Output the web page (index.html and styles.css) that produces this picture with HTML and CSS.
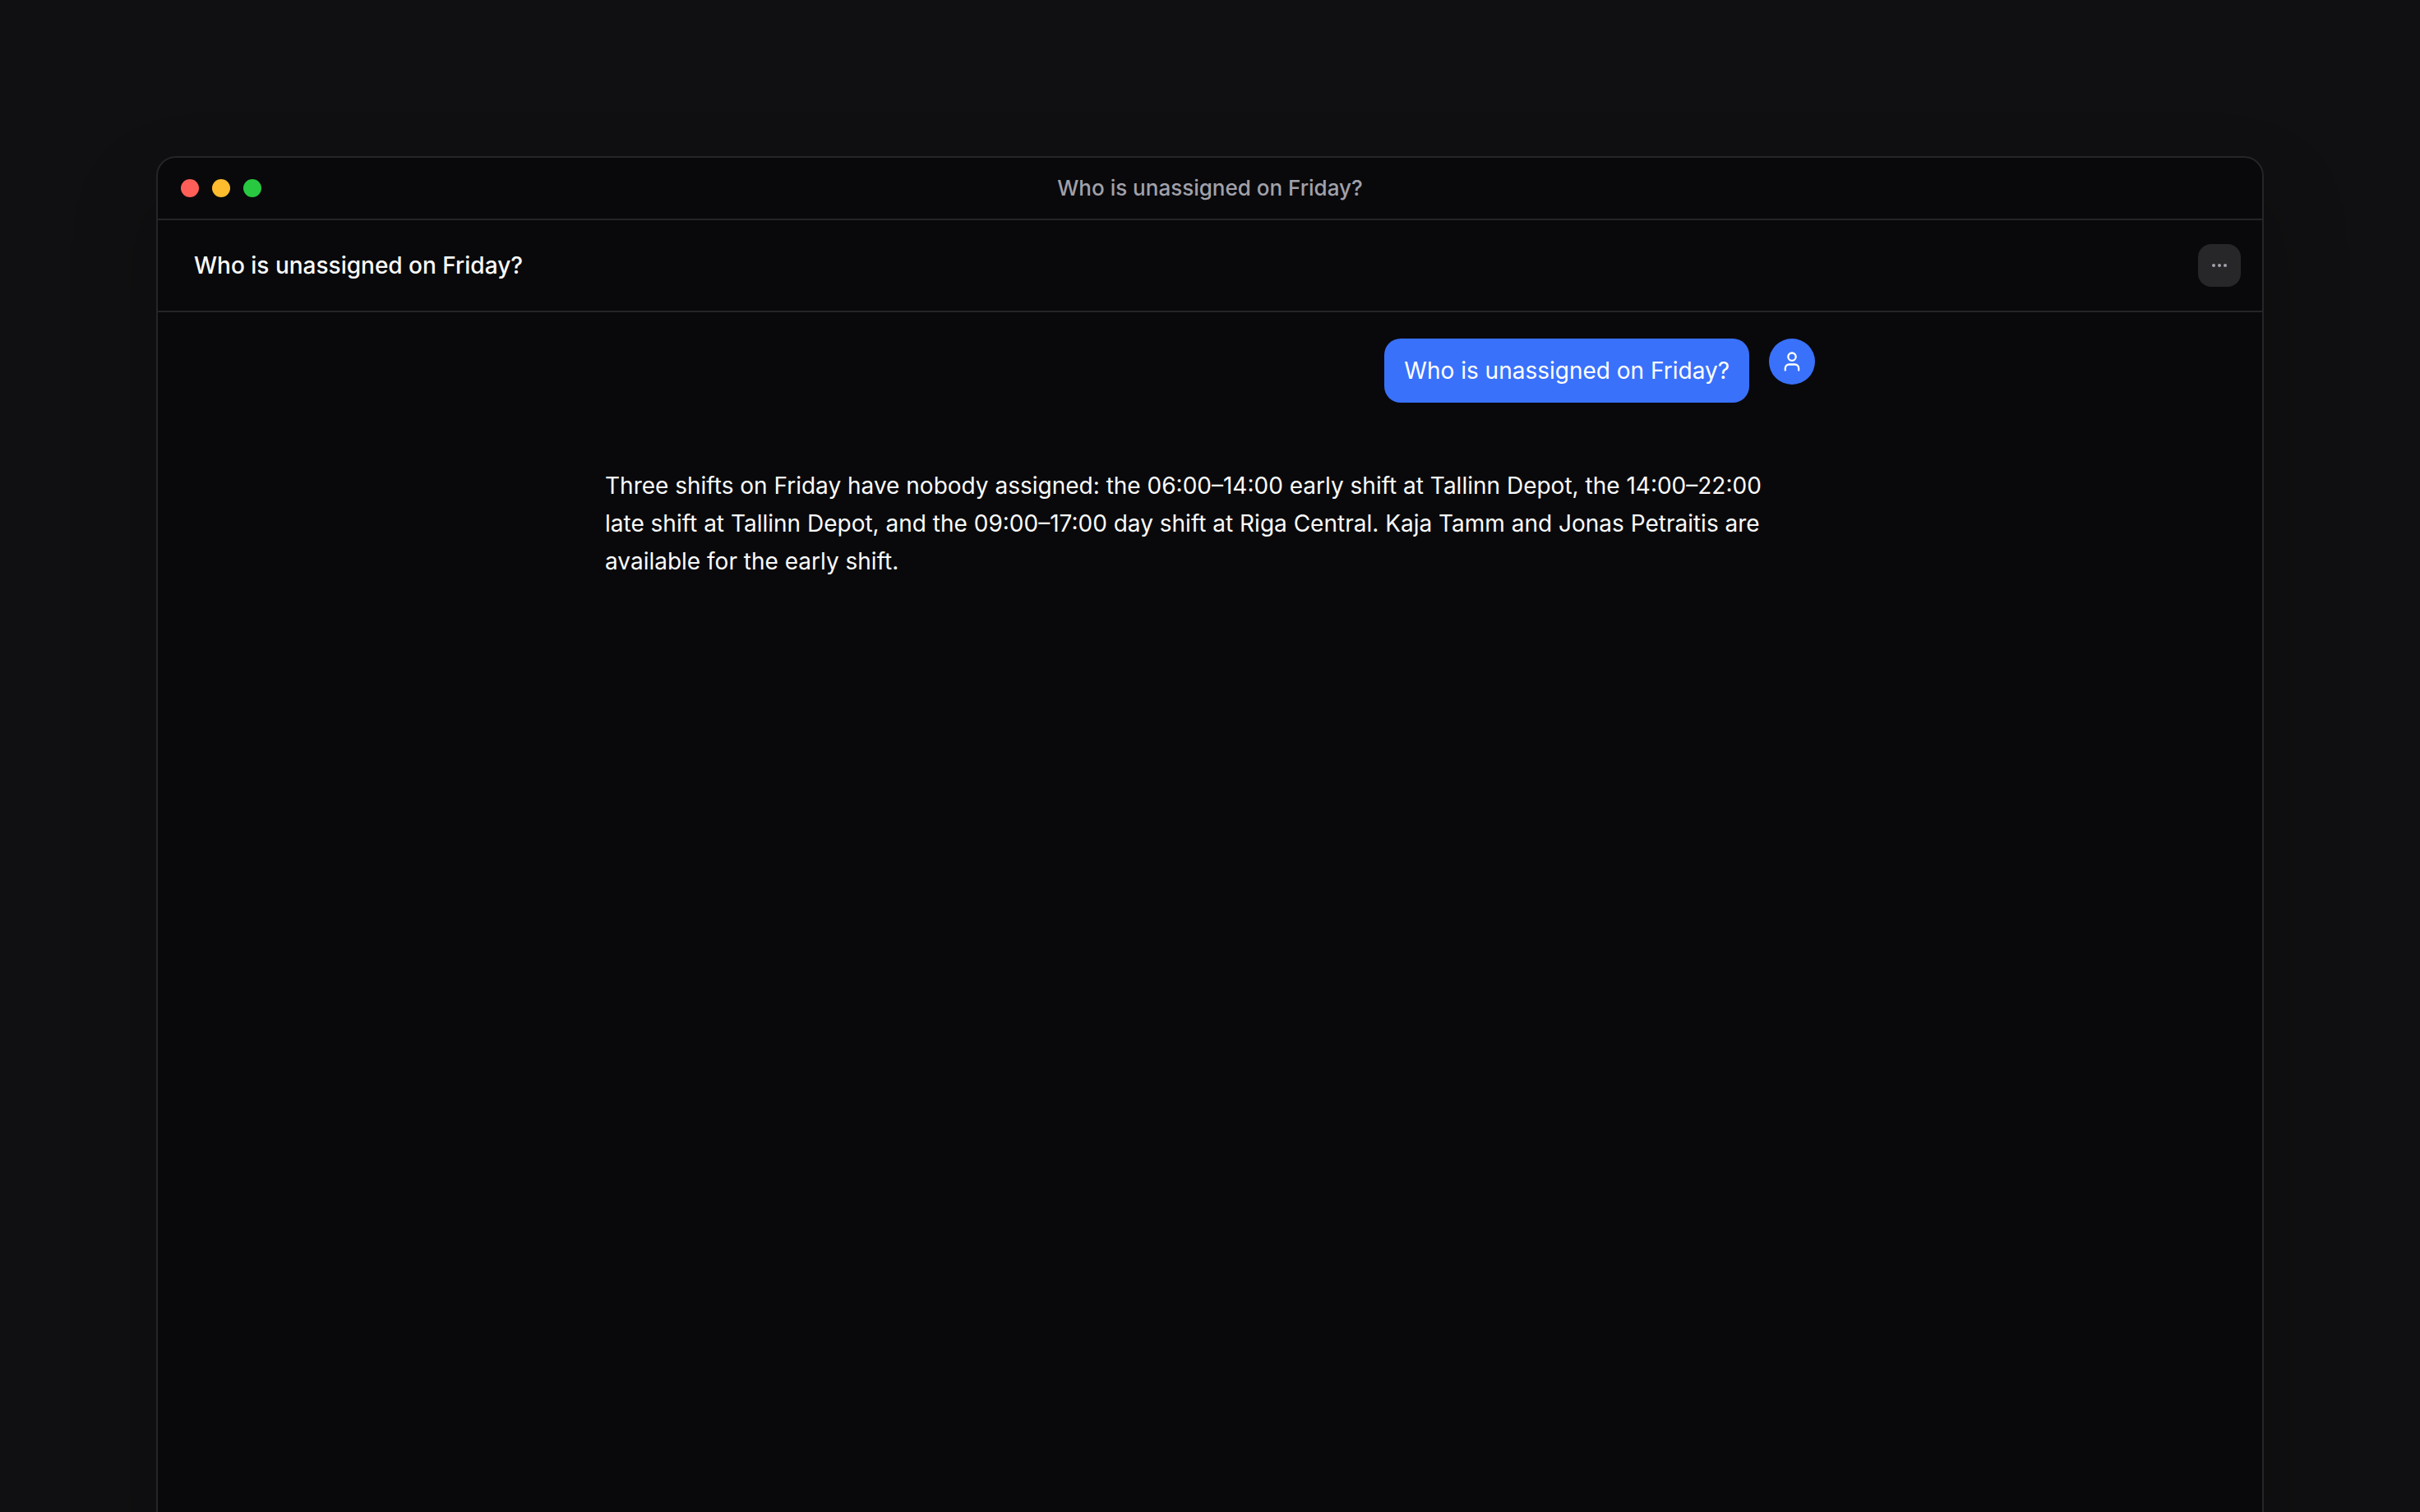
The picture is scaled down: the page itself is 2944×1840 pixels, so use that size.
FILE: index.html
```html
<!doctype html>
<html lang="en">
<head>
<meta charset="utf-8">
<title>Who is unassigned on Friday?</title>
<link rel="stylesheet" href="styles.css">
</head>
<body>
<div class="window">
	<div class="titlebar">
		<div class="lights">
			<span class="light red"></span>
			<span class="light yellow"></span>
			<span class="light green"></span>
		</div>
		<div class="window-title">Who is unassigned on Friday?</div>
	</div>
	<header class="chat-header">
		<h1>Who is unassigned on Friday?</h1>
		<button class="more" type="button" aria-label="More options">
			<svg width="20" height="20" viewBox="0 0 20 20" fill="currentColor">
				<circle cx="3" cy="10" r="2"/>
				<circle cx="10" cy="10" r="2"/>
				<circle cx="17" cy="10" r="2"/>
			</svg>
		</button>
	</header>
	<main class="thread">
		<div class="message user">
			<p class="bubble">Who is unassigned on Friday?</p>
			<span class="avatar">
				<svg width="28" height="28" viewBox="0 0 24 24" fill="none" stroke="currentColor" stroke-width="2" stroke-linecap="round" stroke-linejoin="round">
					<path d="M19 21v-2a4 4 0 0 0-4-4H9a4 4 0 0 0-4 4v2"/>
					<circle cx="12" cy="7" r="4"/>
				</svg>
			</span>
		</div>
		<div class="message assistant">
			<p>Three shifts on Friday have nobody assigned: the 06:00–14:00 early shift at Tallinn Depot, the 14:00–22:00 late shift at Tallinn Depot, and the 09:00–17:00 day shift at Riga Central. Kaja Tamm and Jonas Petraitis are available for the early shift.</p>
		</div>
	</main>
</div>
</body>
</html>
```
FILE: styles.css
```css
* {
	box-sizing: border-box;
}
html, body {
	height: 100%;
}
body {
	margin: 0;
	padding: 190px 190px 0;
	overflow: hidden;
	background: #101012;
	color: #fafafa;
	font-family: Inter, "Liberation Sans", sans-serif;
	font-size: 28px;
	font-optical-sizing: none;
	line-height: 46px;
}
h1, p {
	margin: 0;
}
.window {
	min-height: calc(100% + 40px);
	background: #09090b;
	border: 2px solid #252527;
	border-radius: 24px;
	box-shadow: 0 50px 100px rgba(0, 0, 0, 0.25);
	overflow: hidden;
}
.titlebar {
	display: grid;
	grid-template-columns: 1fr auto 1fr;
	align-items: center;
	height: 76px;
	padding: 0 28px;
	border-bottom: 2px solid #252527;
}
.lights {
	display: flex;
	gap: 16px;
}
.light {
	width: 22px;
	height: 22px;
	border-radius: 50%;
}
.red {
	background: #ff5f57;
}
.yellow {
	background: #febc2e;
}
.green {
	background: #28c840;
}
.window-title {
	color: #a1a1aa;
	font-size: 26px;
	font-weight: 500;
}
.chat-header {
	display: flex;
	align-items: center;
	justify-content: space-between;
	height: 112px;
	padding: 0 26px 0 44px;
	border-bottom: 2px solid #252527;
}
.chat-header h1 {
	font-size: 28px;
	font-weight: 500;
}
.more {
	display: flex;
	align-items: center;
	justify-content: center;
	width: 52px;
	height: 52px;
	padding: 0;
	border: 0;
	border-radius: 16px;
	background: #27272a;
	color: #a1a1aa;
}
.thread {
	display: flex;
	flex-direction: column;
	gap: 78px;
	max-width: 1472px;
	margin: 0 auto;
	padding: 32px 0;
}
.message {
	display: flex;
	gap: 24px;
}
.user {
	justify-content: flex-end;
}
.bubble {
	padding: 16px 24px;
	border-radius: 20px;
	background: #3971fb;
	color: #fff;
}
.avatar {
	display: flex;
	align-items: center;
	justify-content: center;
	width: 56px;
	height: 56px;
	border-radius: 50%;
	background: #3971fb;
	color: #fff;
}
.assistant {
	padding-right: 48px;
}
```
